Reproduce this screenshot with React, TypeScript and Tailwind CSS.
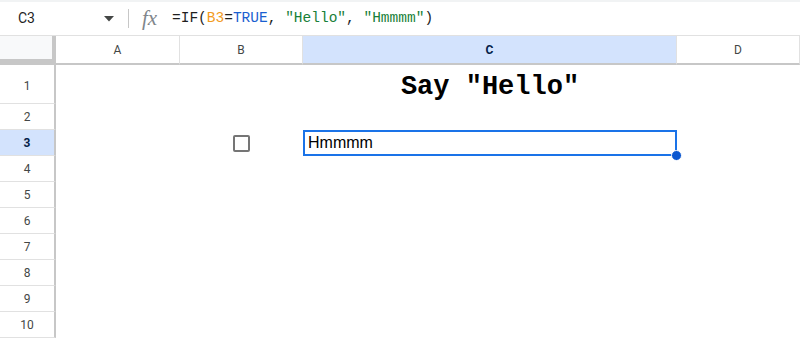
import React from 'react';

const cols = [
  { id: 'A', w: 'w-[124px]' },
  { id: 'B', w: 'w-[123px]' },
  { id: 'C', w: 'w-[374px]', active: true },
  { id: 'D', w: 'flex-1' },
];

const rows = [2, 3, 4, 5, 6, 7, 8, 9, 10];

function RowHead({ n, active, tall }: { n: number; active?: boolean; tall?: boolean }) {
  return (
    <div
      className={`w-[56px] shrink-0 flex items-center justify-center border-r-2 border-b border-r-[#c7c7c7] border-b-[#e1e1e1] text-[12px] ${
        tall ? 'h-[39px] pt-[4px]' : 'h-[26px]'
      } ${active ? 'bg-[#d3e3fd] text-[#041e49] font-bold' : 'bg-white text-[#444746]'}`}
    >
      {n}
    </div>
  );
}

export default function App() {
  return (
    <div className="w-[800px] h-[338px] overflow-hidden bg-white font-['Roboto','Liberation_Sans',sans-serif]">
      {/* formula bar */}
      <div className="h-[36px] flex items-center border-t-2 border-t-[#f1f3f4] border-b border-b-[#e1e1e1]">
        <div className="w-[128px] flex items-center pl-[18px] pr-[14px] justify-between">
          <span className="text-[14px] text-[#1f1f1f]">C3</span>
          <svg width="10" height="6" viewBox="0 0 10 6" className="mt-[1px]">
            <path d="M0 0h10L5 5.5z" fill="#444746" />
          </svg>
        </div>
        <div className="w-px h-[19px] bg-[#c7c7c7]" />
        <span className="ml-[13px] w-[24px] text-[21px] italic text-[#80868b] font-['Liberation_Serif',serif] leading-none">
          fx
        </span>
        <span className="ml-[6px] text-[14.5px] font-['Liberation_Mono',monospace] text-[#1f1f1f] whitespace-pre">
          =IF(<span className="text-[#f29b1d]">B3</span>=<span className="text-[#1a5fd0]">TRUE</span>,{' '}
          <span className="text-[#188038]">"Hello"</span>, <span className="text-[#188038]">"Hmmmm"</span>)
        </span>
      </div>

      {/* column headers */}
      <div className="flex h-[29px]">
        <div className="w-[56px] shrink-0 bg-[#f8f9fa] border-r-4 border-b-[6px] border-[#c7c7c7]" />
        {cols.map((c) => (
          <div
            key={c.id}
            className={`${c.w} shrink-0 flex items-center justify-center border-r border-r-[#e1e1e1] border-b-2 border-b-[#c7c7c7] text-[12px] ${
              c.active ? 'bg-[#d3e3fd] text-[#041e49] font-bold' : 'bg-white text-[#444746]'
            }`}
          >
            {c.id}
          </div>
        ))}
      </div>

      {/* row 1 */}
      <div className="flex">
        <RowHead n={1} tall />
        <div className="w-[247px]" />
        <div className="w-[374px] flex items-center justify-center pt-[5px] text-[27px] leading-none font-bold font-['Liberation_Mono',monospace] text-black">
          Say "Hello"
        </div>
      </div>

      {rows.map((n) => (
        <div key={n} className="flex">
          <RowHead n={n} active={n === 3} />
          {n === 3 && (
            <>
              <div className="w-[124px]" />
              <div className="w-[123px] flex items-center justify-center">
                <div className="w-[17px] h-[17px] border-2 border-[#757575] rounded-[2px]" />
              </div>
              <div className="relative w-[374px] h-[26px] border-2 border-[#1a73e8] flex items-center pl-[3px] text-[16px] text-black font-['Liberation_Sans',sans-serif]">
                Hmmmm
                <div className="absolute right-[-7px] bottom-[-7px] w-[11px] h-[11px] rounded-full bg-[#0b57d0] border border-white" />
              </div>
            </>
          )}
        </div>
      ))}
    </div>
  );
}
